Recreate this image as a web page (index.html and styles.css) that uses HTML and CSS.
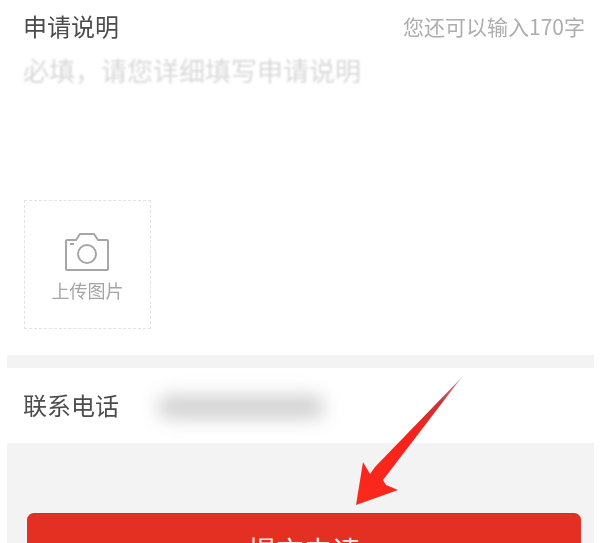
FILE: index.html
```html
<!DOCTYPE html>
<html lang="zh-CN">
<head>
  <meta charset="UTF-8" />
  <meta name="viewport" content="width=device-width, initial-scale=1.0" />
  <title>申请说明</title>
  <link rel="stylesheet" href="styles.css">
</head>
<body>
  <div class="page">
    <div class="section desc">
      <div class="desc-head">
        <span class="label">申请说明</span>
        <span class="counter">您还可以输入170字</span>
      </div>
      <div class="placeholder">必填，请您详细填写申请说明</div>
      <div class="upload">
        <svg class="camera" viewBox="0 0 44 38" fill="none" stroke="#a6a6a6" stroke-width="2">
          <path d="M2 7h9l4-6h14l4 6h9a1 1 0 0 1 1 1v28a1 1 0 0 1-1 1H2a1 1 0 0 1-1-1V8a1 1 0 0 1 1-1z" />
          <circle cx="22" cy="21" r="9" />
          <path d="M5 11h4" />
        </svg>
        <span class="upload-text">上传图片</span>
      </div>
    </div>
    <div class="divider"></div>
    <div class="section phone">
      <span class="label">联系电话</span>
      <span class="phone-mask"></span>
    </div>
    <div class="footer">
      <button class="submit-btn">提交申请</button>
    </div>
  </div>

  <svg class="arrow" viewBox="0 0 600 543">
    <defs>
      <linearGradient id="arrowFade" x1="462" y1="377" x2="356" y2="505" gradientUnits="userSpaceOnUse">
        <stop offset="0" stop-color="#b9a3a3" />
        <stop offset="0.2" stop-color="#c8353a" />
        <stop offset="0.45" stop-color="#f5221b" />
        <stop offset="1" stop-color="#fb2a1c" />
      </linearGradient>
    </defs>
    <path d="M462 377 L375 467 L370 474 L363 462 L356 505 L398 490 L386 485 L383 480 Z" fill="url(#arrowFade)" />
  </svg>
</body>
</html>
```

FILE: styles.css
```css
html, body {
  margin: 0;
  padding: 0;
  height: 543px;
  overflow: hidden;
  background: #fff;
}

body {
  font-family: "Noto Sans CJK SC", "Liberation Sans", sans-serif;
  position: relative;
}

.page {
  margin: 0 6px 0 7px;
}

.section {
  background: #fff;
  padding: 0 17px;
}

.desc {
  height: 355px;
  box-sizing: border-box;
  padding-top: 8px;
}

.desc-head {
  display: flex;
  justify-content: space-between;
  align-items: center;
  height: 36px;
}

.label {
  font-size: 24px;
  line-height: 36px;
  color: #4c4c4c;
  margin-left: -1px;
  filter: blur(0.7px);
}

.counter {
  font-size: 21px;
  color: #adadad;
  margin-right: -8px;
  filter: blur(0.7px);
}

.placeholder {
  font-size: 26px;
  line-height: 36px;
  margin: 8px 0 0 -1px;
  color: #d8d8d8;
  filter: blur(0.8px);
}

.upload {
  width: 127px;
  height: 129px;
  margin-top: 112px;
  box-sizing: border-box;
  border: 1px dashed #e2e2e2;
  display: flex;
  flex-direction: column;
  align-items: center;
  padding-top: 32px;
}

.camera {
  width: 44px;
  height: 38px;
  margin-left: -2px;
  filter: blur(0.6px);
}

.upload-text {
  font-size: 18px;
  line-height: 26px;
  margin-top: 6px;
  color: #a5a5a5;
  filter: blur(0.7px);
}

.divider {
  height: 13px;
  background: #f3f3f3;
}

.phone {
  display: flex;
  align-items: center;
  box-sizing: border-box;
  height: 75px;
  padding-bottom: 2px;
}

.phone-mask {
  width: 166px;
  height: 24px;
  margin: 4px 0 0 39px;
  background: #d2d2d2;
  border-radius: 10px;
  filter: blur(9px);
}

.footer {
  background: #f3f3f3;
  height: 120px;
  padding: 70px 13px 0 20px;
}

.submit-btn {
  display: block;
  width: 100%;
  height: 66px;
  padding: 6px 0 0;
  border: none;
  border-top: 1px solid #cf3029;
  border-radius: 7px;
  background: #e33022;
  color: #fbe9e4;
  font-family: inherit;
  font-size: 28px;
  line-height: 40px;
  text-align: center;
  vertical-align: top;
}

.arrow {
  position: absolute;
  top: 0;
  left: 0;
  width: 600px;
  height: 543px;
  pointer-events: none;
}
```
